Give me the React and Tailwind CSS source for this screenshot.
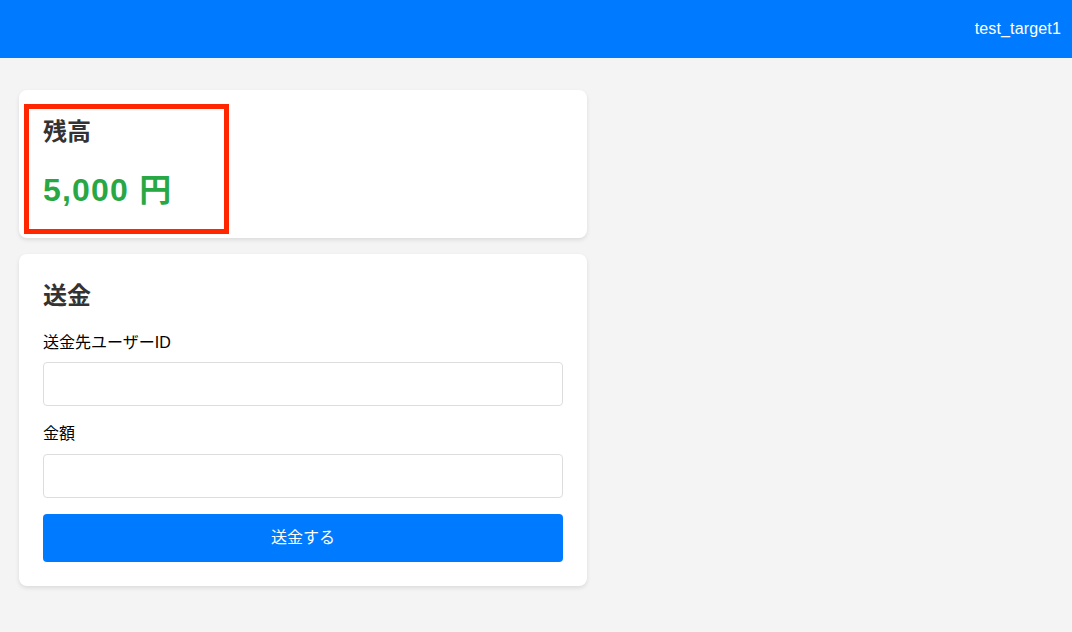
export default function App() {
  const font = { fontFamily: '"Liberation Sans", "Noto Sans CJK JP", sans-serif' };
  return (
    <div className="min-h-[632px] bg-[#f4f4f4] text-[#333]" style={font}>
      <header className="h-[58px] bg-[#007bff] flex items-center justify-end pr-[11px]">
        <span className="text-white text-[16px] tracking-[0.15px]">test_target1</span>
      </header>
      <main className="pl-[19px] pt-[32px] flex flex-col gap-4 w-[587px]">
        <section className="relative bg-white rounded-lg shadow-[0_2px_4px_rgba(0,0,0,0.1)] p-6">
          <h2 className="text-[24px] leading-[36px] font-bold text-[#333]">残高</h2>
          <p className="mt-4 text-[32px] leading-[48px] font-bold text-[#28a745] tracking-[1.2px]">5,000 円</p>
          <div className="absolute left-[5px] top-[14px] w-[205px] h-[130px] border-[5px] border-[#ff2600] pointer-events-none" />
        </section>
        <section className="bg-white rounded-lg shadow-[0_2px_4px_rgba(0,0,0,0.1)] p-6">
          <h2 className="text-[24px] leading-[36px] font-bold text-[#333]">送金</h2>
          <label className="block mt-[17px] text-[16px] leading-[24px] text-black">送金先ユーザーID</label>
          <input className="block mt-[7px] w-full h-[44px] border border-[#ddd] rounded bg-white" />
          <label className="block mt-4 text-[16px] leading-[24px] text-black">金額</label>
          <input className="block mt-[8px] w-full h-[44px] border border-[#ddd] rounded bg-white" />
          <button className="mt-4 w-full h-[48px] bg-[#007bff] text-white text-[16px] rounded">送金する</button>
        </section>
      </main>
    </div>
  );
}
